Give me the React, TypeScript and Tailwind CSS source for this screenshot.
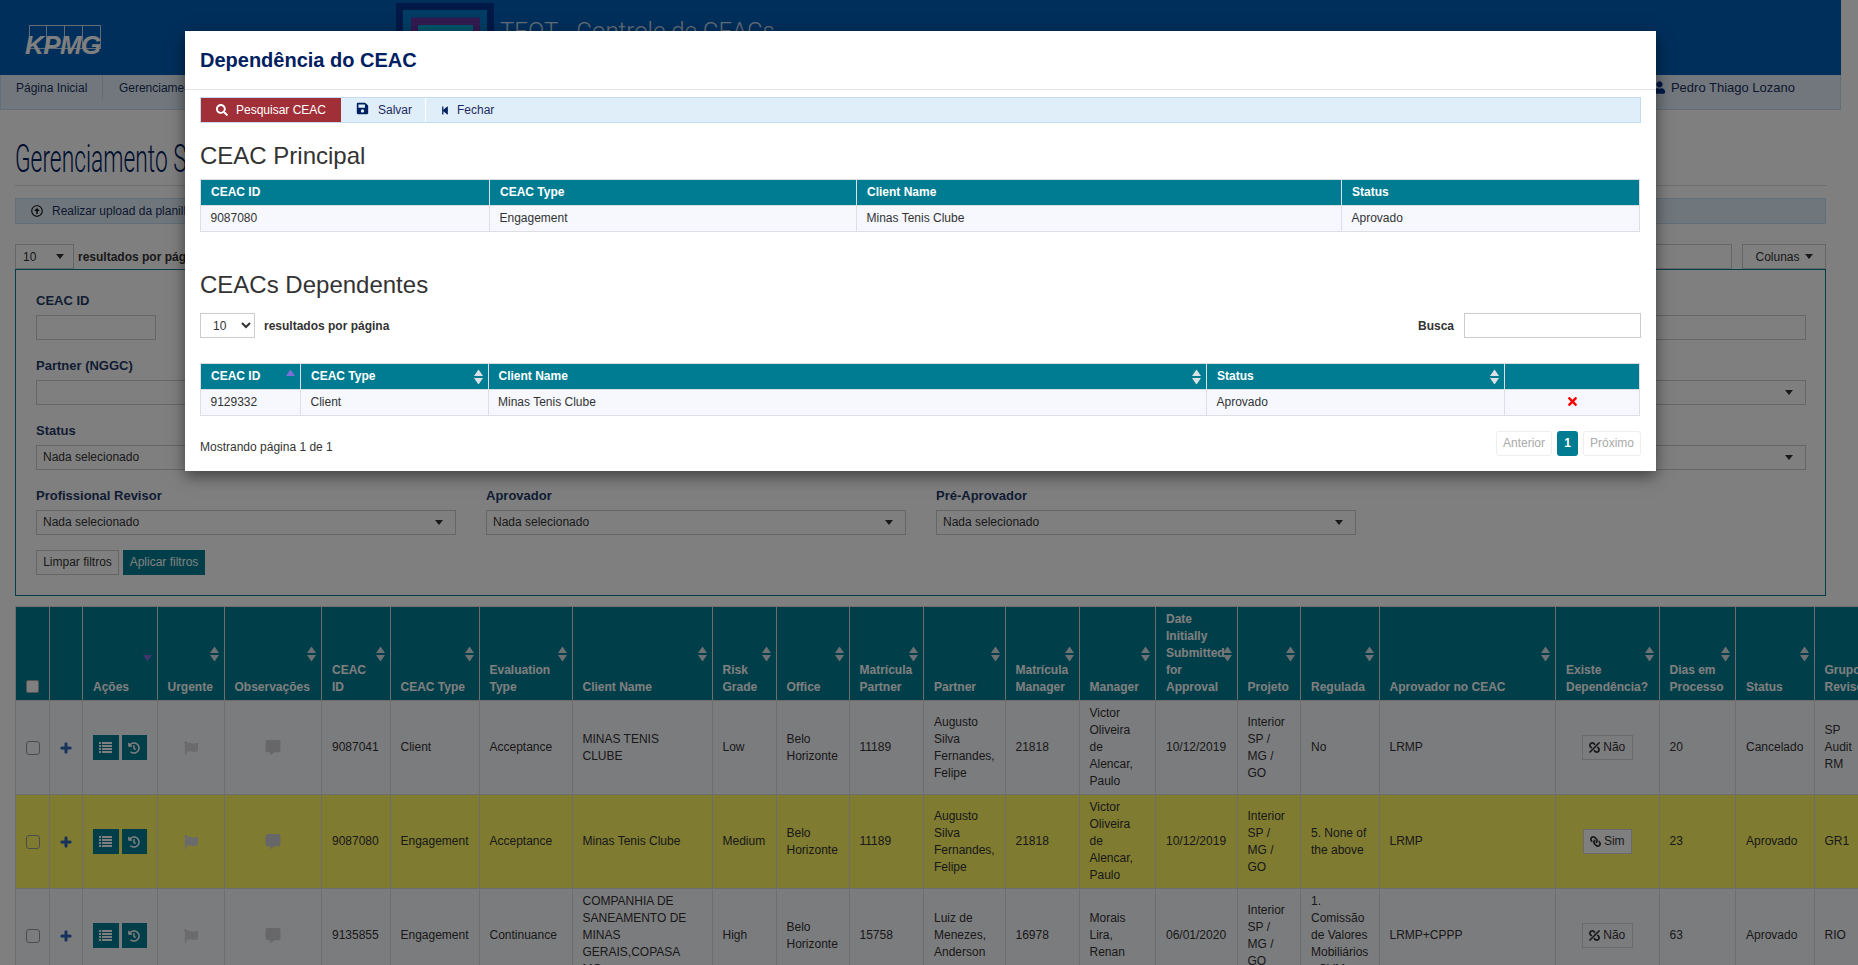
import React from "react";
import {
  FaSearch, FaSave, FaStepBackward, FaTimes, FaUser, FaPlus, FaHistory,
  FaFlag, FaCommentAlt, FaLink, FaUnlink, FaRegArrowAltCircleUp,
} from "react-icons/fa";

const Caret = () => (
  <span className="h-0 w-0 border-x-[4px] border-t-[5px] border-x-transparent border-t-[#333]" />
);

const Sort = ({ mode = "both" }: { mode?: "both" | "up" | "down" }) => (
  <svg viewBox="0 0 9 15" className="absolute right-[5px] top-1/2 h-[15px] w-[9px] -translate-y-1/2">
    {mode !== "down" && <path d="M4.5 0 L9 6.5 H0 Z" fill={mode === "up" ? "#7d6fd8" : "#d9e2e6"} />}
    {mode !== "up" && <path d="M0 8.5 H9 L4.5 15 Z" fill={mode === "down" ? "#7d6fd8" : "#d9e2e6"} />}
  </svg>
);

const ListIcon = () => (
  <svg viewBox="0 0 13 11" className="h-[11px] w-[13px]" fill="currentColor">
    <rect x="0" y="0" width="2" height="2" /><rect x="3" y="0" width="10" height="2" />
    <rect x="0" y="3" width="2" height="2" /><rect x="3" y="3" width="10" height="2" />
    <rect x="0" y="6" width="2" height="2" /><rect x="3" y="6" width="10" height="2" />
    <rect x="0" y="9" width="2" height="2" /><rect x="3" y="9" width="10" height="2" />
  </svg>
);

const FakeSelect = ({ text = "Nada selecionado" }: { text?: string }) => (
  <div className="flex h-[25px] w-[419.5px] items-center justify-between border border-[#ccc] pb-[1px] pl-[6px] pr-[12px]">
    <span>{text}</span>
    <Caret />
  </div>
);

const Field = ({ label, children }: { label?: string; children: React.ReactNode }) => (
  <div>
    <div className="mb-[6px] h-[17px] pt-[1px] text-[13px] font-bold leading-[16px] text-[#1f3a68]">{label}</div>
    {children}
  </div>
);

const mainCols = [
  "w-[34px]", "w-[33px]", "w-[74.5px]", "w-[67px]", "w-[97.5px]", "w-[68.5px]", "w-[89px]", "w-[93px]",
  "w-[140px]", "w-[64px]", "w-[73px]", "w-[74.5px]", "w-[81.5px]", "w-[74px]", "w-[76.5px]", "w-[81.5px]",
  "w-[63.5px]", "w-[78.5px]", "w-[176.5px]", "w-[103.5px]", "w-[76.5px]", "w-[78.5px]", "w-[64px]",
];

const headers = [
  "Urgente", "Observações", "CEAC ID", "CEAC Type", "Evaluation Type", "Client Name", "Risk Grade", "Office",
  "Matrícula Partner", "Partner", "Matrícula Manager", "Manager", "Date Initially Submitted for Approval",
  "Projeto", "Regulada", "Aprovador no CEAC", "Existe Dependência?", "Dias em Processo", "Status", "Grupo Revisor",
];

const rows = [
  {
    bg: "bg-[#f7f8fd]", id: "9087041", type: "Client", ev: "Acceptance", client: "MINAS TENIS CLUBE", risk: "Low",
    mp: "11189", partner: "Augusto Silva Fernandes, Felipe", mm: "21818", manager: "Victor Oliveira de Alencar, Paulo",
    date: "10/12/2019", reg: "No", apr: "LRMP", dep: false, dias: "20", status: "Cancelado", grupo: "SP Audit RM",
  },
  {
    bg: "bg-[#fff660]", id: "9087080", type: "Engagement", ev: "Acceptance", client: "Minas Tenis Clube", risk: "Medium",
    mp: "11189", partner: "Augusto Silva Fernandes, Felipe", mm: "21818", manager: "Victor Oliveira de Alencar, Paulo",
    date: "10/12/2019", reg: "5. None of the above", apr: "LRMP", dep: true, dias: "23", status: "Aprovado", grupo: "GR1",
  },
  {
    bg: "bg-[#f7f8fd]", id: "9135855", type: "Engagement", ev: "Continuance",
    client: "COMPANHIA DE SANEAMENTO DE MINAS GERAIS,COPASA MG", risk: "High",
    mp: "15758", partner: "Luiz de Menezes, Anderson", mm: "16978", manager: "Morais Lira, Renan",
    date: "06/01/2020", reg: "1. Comissão de Valores Mobiliários - CVM", apr: "LRMP+CPPP", dep: false, dias: "63", status: "Aprovado", grupo: "RIO",
  },
];

const Td = ({ children, className = "" }: { children?: React.ReactNode; className?: string }) => (
  <td className={`h-[94px] border border-[#ddd] px-[10px] align-middle leading-[17px] ${className}`}>{children}</td>
);

const ModalTh = ({ children, sort }: { children?: React.ReactNode; sort?: "both" | "up" }) => (
  <th className="relative h-[26px] border border-[#dcdfe6] bg-[#007c92] pb-[1px] pl-[10px] pr-[9px] pt-0 text-left font-bold text-white">
    {children}
    {sort && <Sort mode={sort} />}
  </th>
);
const ModalTd = ({ children, className = "" }: { children?: React.ReactNode; className?: string }) => (
  <td className={`h-[26px] border border-[#dcdfe6] bg-[#f6f8fd] pb-[1px] pl-[9.5px] pr-[9px] pt-0 ${className}`}>{children}</td>
);

export default function App() {
  return (
    <div className="relative h-[965px] w-[1858px] overflow-hidden bg-white font-['Liberation_Sans',Arial,sans-serif] text-[12px] text-[#333]">
      <div className="w-[1841px]">
        {/* top header */}
        <header className="flex h-[75px] items-start overflow-hidden bg-[#005eb8]">
          <div className="relative ml-[25px] mt-[25px] h-[32px] w-[78px]">
            <div className="ml-[4px] flex">
              <div className="h-[24px] w-[18px] border border-[#c6d6ea]" />
              <div className="h-[24px] w-[18px] border border-l-0 border-[#c6d6ea]" />
              <div className="h-[24px] w-[18px] border border-l-0 border-[#c6d6ea]" />
              <div className="h-[24px] w-[18px] border border-l-0 border-[#c6d6ea]" />
            </div>
            <span className="absolute left-0 top-[8px] text-[26px] font-bold italic leading-[24px] tracking-[-0.6px] text-white">KPMG</span>
          </div>
          <svg viewBox="0 0 98 72" className="ml-[293px] mt-[3px] h-[72px] w-[98px] shrink-0">
            <rect width="98" height="72" fill="#00338d" />
            <rect x="7" y="7" width="84" height="65" fill="#0078c8" />
            <rect x="15" y="14.5" width="69" height="58" fill="#6434a0" />
            <rect x="22" y="22" width="55" height="50" fill="#00a8d0" />
          </svg>
          <span className="ml-[6px] mt-[15px] font-['Roboto',sans-serif] text-[24px] font-light leading-[32px] text-[#c9dcf0]">TEOT - Controle de CEACs</span>
        </header>

        {/* nav */}
        <nav className="flex h-[35px] items-start border-x border-b border-[#c5dcf0] bg-[#e2eef8] text-[#1c2f5f]">
          <a className="flex h-[25px] items-center border-r border-[#ccd9e4] pl-[15px] pr-[14.5px]">Página Inicial</a>
          <a className="flex h-[25px] items-center pl-[16px]">Gerenciamento</a>
          <div className="ml-auto flex h-[25px] items-center gap-[6px] pr-[45px] text-[13px]">
            <FaUser className="h-[13px] w-[11px] text-[#00338d]" />
            <span>Pedro Thiago Lozano</span>
          </div>
        </nav>

        <main className="px-[15px]">
          <div className="h-[76px] border-b border-[#d8dde6] pt-[32px]">
            <h1 className="origin-left scale-x-[0.6] whitespace-nowrap font-['Roboto',sans-serif] text-[38px] font-light leading-[34px] text-[#00205f]">Gerenciamento SIGA</h1>
          </div>

          <div className="mt-[12px] flex h-[26px] items-center border border-[#c5dcf0] bg-[#e0eef9] pl-[15px] text-[#1c2f5f]">
            <FaRegArrowAltCircleUp className="h-[12px] w-[12px] text-[#111]" />
            <span className="ml-[9px]">Realizar upload da planilha</span>
          </div>

          <div className="mt-[20px] flex h-[25px] items-center">
            <div className="flex h-[25px] w-[59px] items-center justify-between border border-[#ccc] pl-[7px] pr-[9px]">
              <span>10</span>
              <Caret />
            </div>
            <span className="ml-[4px] font-bold">resultados por página</span>
            <input className="ml-auto h-[25px] w-[220px] border border-[#ccc]" />
            <div className="ml-[10px] flex h-[25px] w-[84px] items-center justify-center gap-[5px] border border-[#ccc]">
              <span>Colunas</span>
              <Caret />
            </div>
          </div>

          {/* filters */}
          <section className="border border-[#007c92] px-[20px] pb-[20px] pt-[22px]">
            <div className="grid grid-cols-[repeat(4,420px)] gap-x-[30px] gap-y-[17px]">
              <Field label="CEAC ID"><input className="block h-[25px] w-[120px] border border-[#ccc]" /></Field>
              <Field><input className="block h-[25px] w-[419.5px] border border-[#ccc]" /></Field>
              <Field><input className="block h-[25px] w-[419.5px] border border-[#ccc]" /></Field>
              <Field><input className="block h-[25px] w-[419.5px] border border-[#ccc]" /></Field>

              <Field label="Partner (NGGC)"><input className="block h-[25px] w-[419.5px] border border-[#ccc]" /></Field>
              <Field><FakeSelect text="" /></Field>
              <Field><FakeSelect text="" /></Field>
              <Field><FakeSelect text="" /></Field>

              <Field label="Status"><FakeSelect /></Field>
              <Field><FakeSelect text="" /></Field>
              <Field><FakeSelect text="" /></Field>
              <Field><FakeSelect text="" /></Field>

              <Field label="Profissional Revisor"><FakeSelect /></Field>
              <Field label="Aprovador"><FakeSelect /></Field>
              <Field label="Pré-Aprovador"><FakeSelect /></Field>
              <div />
            </div>
            <div className="mt-[15px] flex gap-[4px]">
              <button className="h-[25px] w-[83px] border border-[#ccc] pb-[2px] text-center">Limpar filtros</button>
              <button className="h-[25px] w-[82px] bg-[#007c92] pb-[2px] text-center text-white">Aplicar filtros</button>
            </div>
          </section>

          {/* main table */}
          <table className="mt-[10px] w-[1862.5px] table-fixed border-collapse">
            <colgroup>
              {mainCols.map((c, i) => <col key={i} className={c} />)}
            </colgroup>
            <thead>
              <tr className="bg-[#007c92] text-white">
                <th className="h-[94px] border border-[#ddd] pb-[7px] align-bottom">
                  <input type="checkbox" className="block mx-auto h-[13px] w-[13px] appearance-none rounded-[2px] border border-[#aaa] bg-white" />
                </th>
                <th className="border border-[#ddd]" />
                <th className="relative border border-[#ddd] px-[10px] pb-[4px] text-left align-bottom font-bold leading-[17px]">
                  Ações
                  <Sort mode="down" />
                </th>
                {headers.map((h) => (
                  <th key={h} className="relative border border-[#ddd] pb-[4px] pl-[10px] pr-[10px] text-left align-bottom font-bold leading-[17px]">
                    {h}
                    <Sort />
                  </th>
                ))}
              </tr>
            </thead>
            <tbody>
              {rows.map((r) => (
                <tr key={r.id} className={r.bg}>
                  <td className="h-[94px] border border-[#ddd] text-center align-middle">
                    <input type="checkbox" className="block mx-auto h-[14px] w-[14px] appearance-none rounded-[3px] border border-[#999] bg-transparent" />
                  </td>
                  <td className="border border-[#ddd] align-middle">
                    <FaPlus className="mx-auto h-[12px] w-[12px] text-[#2f66b8]" stroke="currentColor" strokeWidth={30} />
                  </td>
                  <Td>
                    <div className="flex gap-[3px]">
                      <button className="flex h-[25px] w-[26px] items-center justify-center bg-[#007c92] text-white"><ListIcon /></button>
                      <button className="flex h-[25px] w-[25px] items-center justify-center bg-[#007c92] text-white"><FaHistory className="h-[12px] w-[12px]" /></button>
                    </div>
                  </Td>
                  <Td><FaFlag className="mx-auto h-[14px] w-[14px] text-[#d6d6da]" /></Td>
                  <Td><FaCommentAlt className="mx-auto h-[15px] w-[16px] text-[#cfcfd2]" /></Td>
                  <Td>{r.id}</Td>
                  <Td>{r.type}</Td>
                  <Td>{r.ev}</Td>
                  <Td>{r.client}</Td>
                  <Td>{r.risk}</Td>
                  <Td>Belo Horizonte</Td>
                  <Td>{r.mp}</Td>
                  <Td>{r.partner}</Td>
                  <Td>{r.mm}</Td>
                  <Td>{r.manager}</Td>
                  <Td>{r.date}</Td>
                  <Td>Interior SP / MG / GO</Td>
                  <Td>{r.reg}</Td>
                  <Td>{r.apr}</Td>
                  <Td>
                    <button className={`mx-auto flex h-[25px] items-center justify-center gap-[3px] border border-[#d4d4d4] ${r.dep ? "w-[49px] bg-[#ffffff]" : "w-[51px]"}`}>
                      {r.dep ? <FaLink className="h-[11px] w-[11px] -scale-x-100" /> : <FaUnlink className="h-[11px] w-[11px] -scale-x-100" />}
                      <span>{r.dep ? "Sim" : "Não"}</span>
                    </button>
                  </Td>
                  <Td>{r.dias}</Td>
                  <Td>{r.status}</Td>
                  <Td>{r.grupo}</Td>
                </tr>
              ))}
            </tbody>
          </table>
        </main>
      </div>

      {/* backdrop */}
      <div className="absolute inset-0 bg-black/50" />

      {/* modal */}
      <div className="absolute left-[185px] top-[31px] w-[1471px] bg-white shadow-[0_5px_15px_rgba(0,0,0,0.5)]">
        <div className="flex h-[59px] items-center border-b border-[#e5e5e5] pl-[15px]">
          <h4 className="text-[20px] font-bold leading-[20px] text-[#00205f]">Dependência do CEAC</h4>
        </div>
        <div className="px-[15px] pb-[15px] pt-[7px]">
          <div className="flex h-[26px] items-stretch border border-[#c5dcf0] bg-[#e0eef9] text-[#1c2a5f]">
            <button className="flex w-[140px] items-center bg-[#a12f38] pl-[15px] text-white">
              <FaSearch className="h-[12px] w-[12px]" />
              <span className="ml-[8px]">Pesquisar CEAC</span>
            </button>
            <button className="flex w-[85px] items-center border-r border-white pl-[15px]">
              <FaSave className="-mt-[3px] h-[13px] w-[13px] text-[#00205f]" />
              <span className="ml-[9px]">Salvar</span>
            </button>
            <button className="flex items-center pl-[15px]">
              <FaStepBackward className="h-[11px] w-[8px] text-[#00205f]" />
              <span className="ml-[8px]">Fechar</span>
            </button>
          </div>

          <h3 className="mt-[20px] text-[24px] leading-[26px] text-[#333]">CEAC Principal</h3>
          <table className="mt-[10px] w-[1439px] table-fixed border-collapse">
            <colgroup>
              <col className="w-[289px]" /><col className="w-[367px]" /><col className="w-[485px]" /><col className="w-[298px]" />
            </colgroup>
            <thead>
              <tr><ModalTh>CEAC ID</ModalTh><ModalTh>CEAC Type</ModalTh><ModalTh>Client Name</ModalTh><ModalTh>Status</ModalTh></tr>
            </thead>
            <tbody>
              <tr><ModalTd>9087080</ModalTd><ModalTd>Engagement</ModalTd><ModalTd>Minas Tenis Clube</ModalTd><ModalTd>Aprovado</ModalTd></tr>
            </tbody>
          </table>

          <h3 className="mt-[40px] text-[24px] leading-[26px] text-[#333]">CEACs Dependentes</h3>
          <div className="mt-[15px] flex h-[25px] items-center">
            <select defaultValue="10" className="h-[25px] w-[55px] rounded-none border border-[#ccc] bg-white pl-[8px] text-[12px]">
              <option value="10">10</option>
            </select>
            <span className="ml-[9px] font-bold">resultados por página</span>
            <span className="ml-auto font-bold">Busca</span>
            <input className="ml-[10px] h-[25px] w-[177px] border border-[#ccc]" />
          </div>

          <table className="mt-[25px] w-[1439px] table-fixed border-collapse">
            <colgroup>
              <col className="w-[100px]" /><col className="w-[187.5px]" /><col className="w-[718.5px]" /><col className="w-[298px]" /><col className="w-[135px]" />
            </colgroup>
            <thead>
              <tr>
                <ModalTh sort="up">CEAC ID</ModalTh>
                <ModalTh sort="both">CEAC Type</ModalTh>
                <ModalTh sort="both">Client Name</ModalTh>
                <ModalTh sort="both">Status</ModalTh>
                <ModalTh />
              </tr>
            </thead>
            <tbody>
              <tr>
                <ModalTd>9129332</ModalTd>
                <ModalTd>Client</ModalTd>
                <ModalTd>Minas Tenis Clube</ModalTd>
                <ModalTd>Aprovado</ModalTd>
                <ModalTd><FaTimes className="mx-auto -mt-[1px] h-[13px] w-[11px] text-[#f00]" /></ModalTd>
              </tr>
            </tbody>
          </table>

          <div className="mt-[15px] flex h-[25px] items-center">
            <span className="mt-[7px]">Mostrando página 1 de 1</span>
            <div className="ml-auto flex gap-[5px]">
              <button className="h-[25px] w-[56px] rounded-[3px] border border-[#eee] pb-[2px] text-[#aaa]">Anterior</button>
              <button className="h-[25px] w-[21px] rounded-[3px] bg-[#007c92] pb-[2px] font-bold text-white">1</button>
              <button className="h-[25px] w-[58px] rounded-[3px] border border-[#eee] pb-[2px] text-[#aaa]">Próximo</button>
            </div>
          </div>
        </div>
      </div>
    </div>
  );
}
